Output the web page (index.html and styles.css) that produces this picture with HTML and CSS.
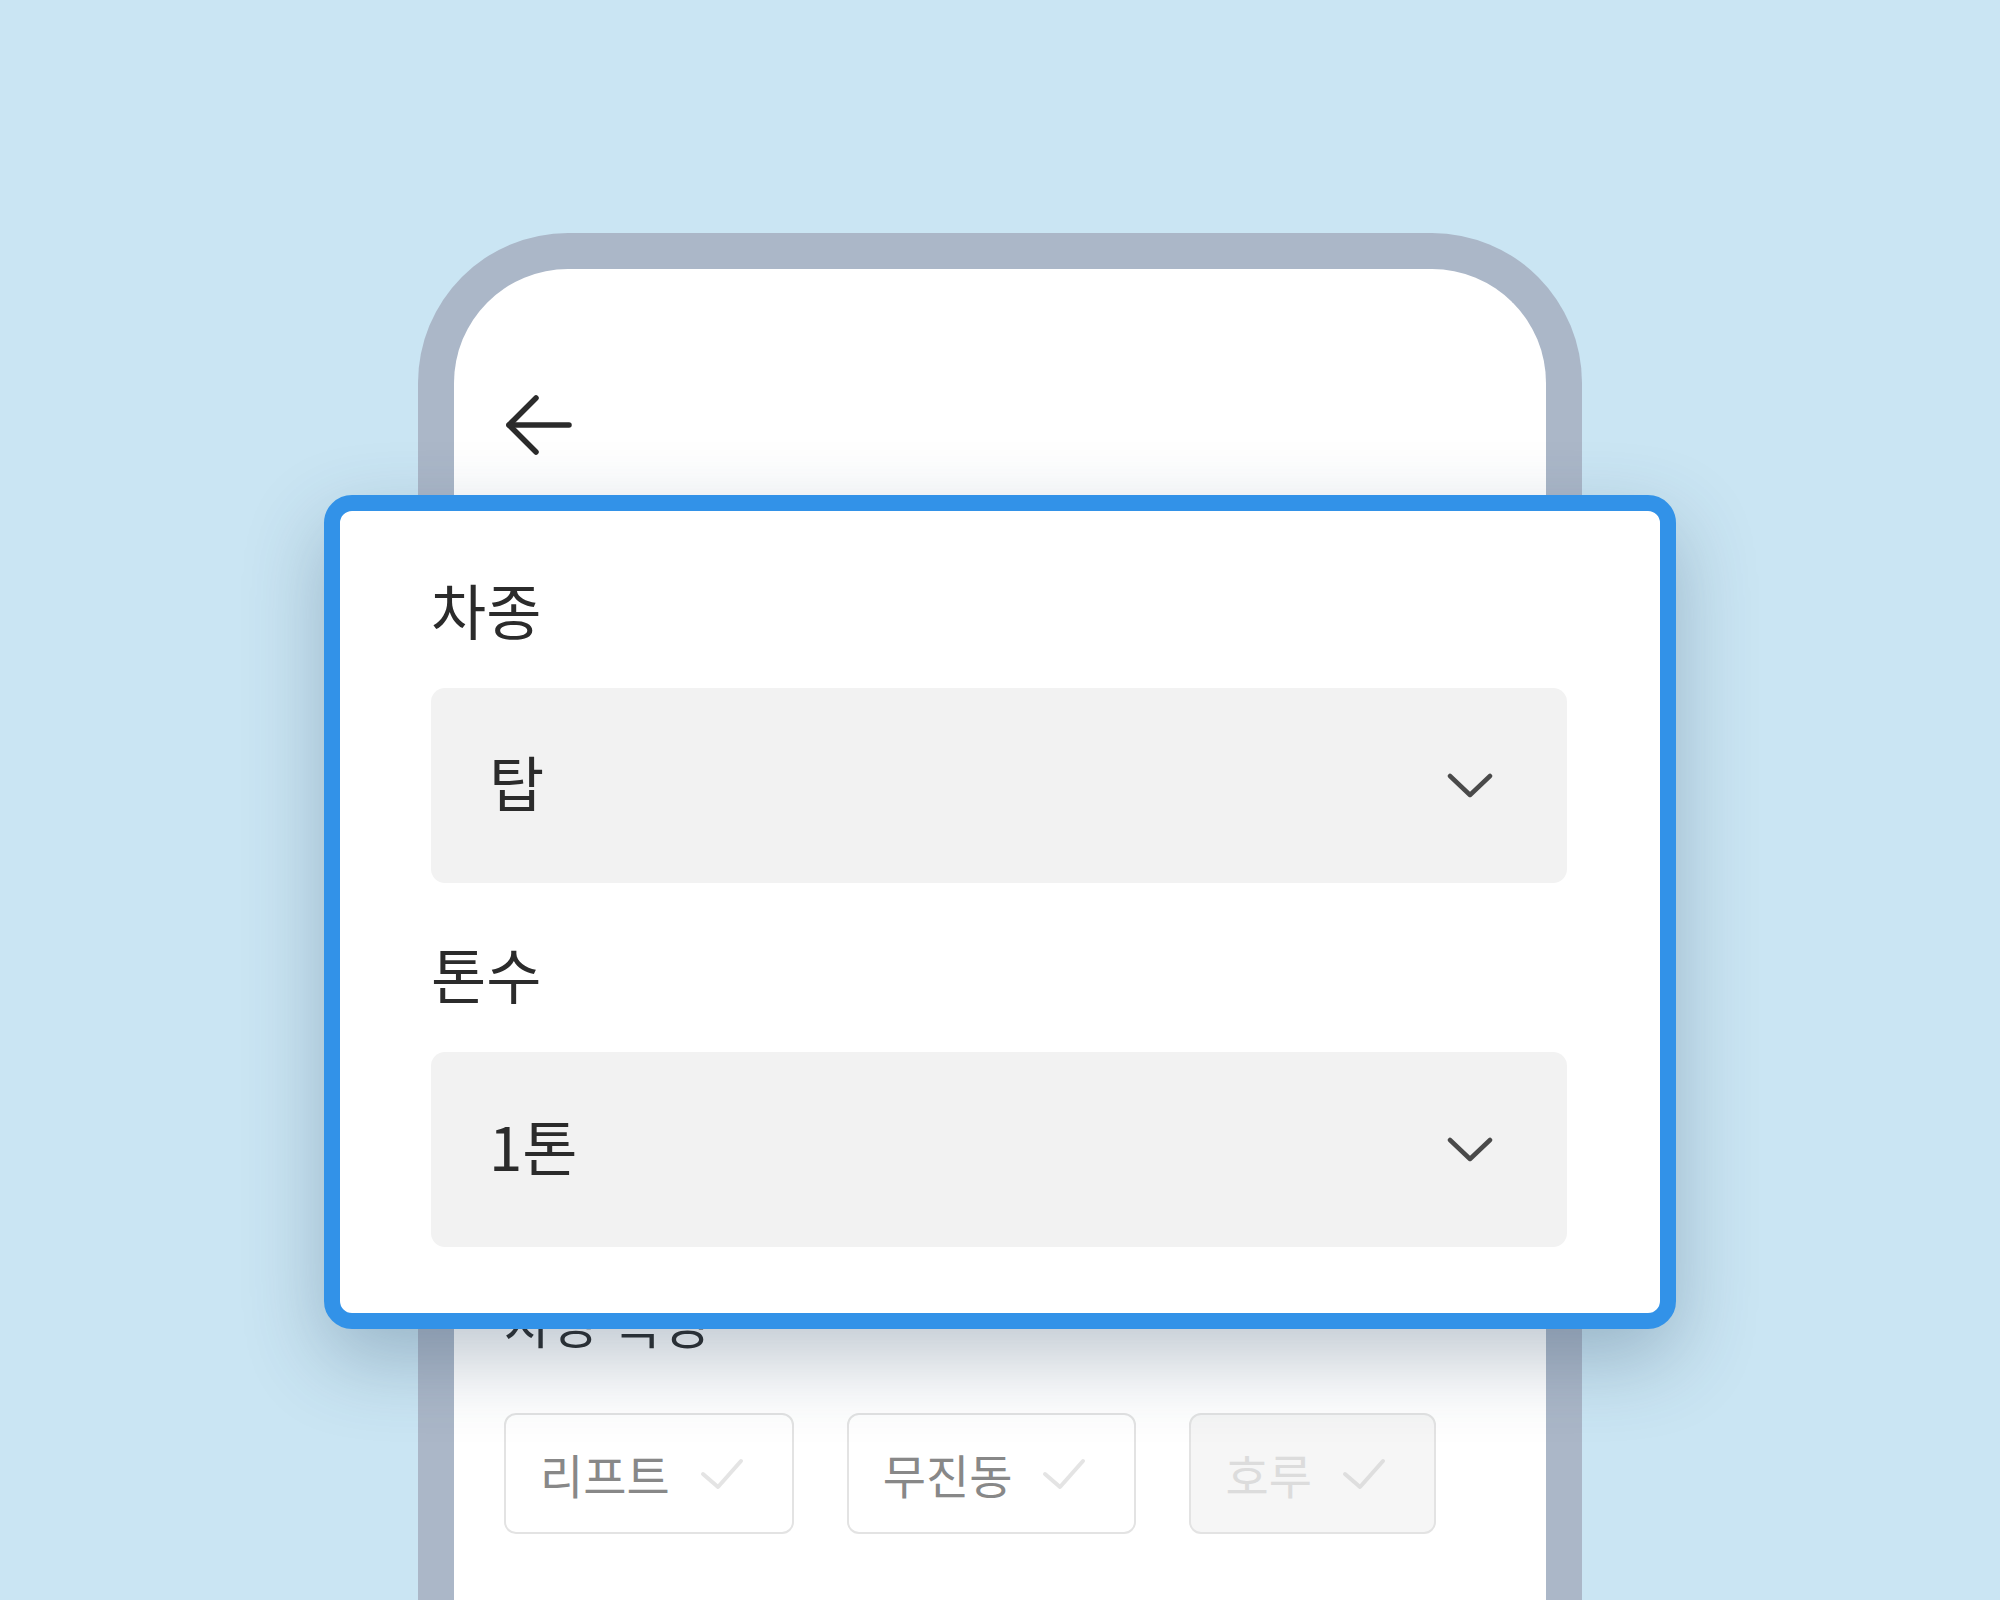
FILE: index.html
```html
<!DOCTYPE html>
<html lang="ko">
<head>
  <meta charset="utf-8">
  <title>차량 정보</title>
  <link rel="stylesheet" href="styles.css">
</head>
<body>
  <div class="stage">
    <div class="phone">
      <div class="appbar">
        <svg class="back" width="70" height="64" viewBox="0 0 70 64">
          <polyline points="32,5 5,32 32,59" />
          <line x1="5" y1="32" x2="65" y2="32" />
        </svg>
      </div>
      <div class="features">
        <h3 class="features-title">차량 특징</h3>
        <ul class="chips">
          <li class="chip">
            <span>리프트</span>
            <svg class="check" width="44" height="32" viewBox="0 0 44 32"><polyline points="3,16 18,29 41,3" /></svg>
          </li>
          <li class="chip">
            <span>무진동</span>
            <svg class="check" width="44" height="32" viewBox="0 0 44 32"><polyline points="3,16 18,29 41,3" /></svg>
          </li>
          <li class="chip disabled">
            <span>호루</span>
            <svg class="check" width="44" height="32" viewBox="0 0 44 32"><polyline points="3,16 18,29 41,3" /></svg>
          </li>
        </ul>
      </div>
    </div>

    <div class="card">
      <div class="field">
        <div class="label">차종</div>
        <div class="select">
          <span class="value">탑</span>
          <svg class="chevron" width="46" height="26" viewBox="0 0 46 26"><polyline points="3,3 23,22 43,3" /></svg>
        </div>
      </div>
      <div class="field">
        <div class="label">톤수</div>
        <div class="select">
          <span class="value">1톤</span>
          <svg class="chevron" width="46" height="26" viewBox="0 0 46 26"><polyline points="3,3 23,22 43,3" /></svg>
        </div>
      </div>
    </div>
  </div>
</body>
</html>
```

FILE: styles.css
```css
*{margin: 0;padding: 0;box-sizing: border-box;}
ul{list-style: none;}
html, body{
  width: 100%;
  height: 100%;
  background-color: #cae5f3;
  color: #2b2b2b;
  font-family: "Noto Sans CJK KR", "Noto Sans", sans-serif;
}
.stage{
  position: relative;
  height: 1600px;
  padding-top: 233px;
  overflow: hidden;
}
.phone{
  width: 1164px;
  height: 1400px;
  margin: 0 auto;
  background-color: #ffffff;
  border: 36px solid #abb7c8;
  border-bottom: none;
  border-radius: 150px 150px 0 0;
}
.appbar{
  padding: 124px 0 0 50px;
}
.back{
  display: block;
  fill: none;
  stroke: #2b2b2b;
  stroke-width: 5.5;
  stroke-linecap: round;
  stroke-linejoin: round;
}
.features{
  margin-top: 839px;
  padding-left: 50px;
}
.features-title{
  font-size: 52px;
  font-weight: 400;
  line-height: 52px;
}
.chips{
  display: flex;
  gap: 53px;
  margin-top: 65px;
}
.chip{
  display: flex;
  align-items: center;
  gap: 30px;
  height: 121px;
  padding: 0 48px 0 34px;
  border: 2px solid #e3e3e3;
  border-radius: 12px;
  font-size: 47px;
  color: #888888;
}
.check{
  fill: none;
  stroke: #e4e4e4;
  stroke-width: 4;
  stroke-linecap: round;
  stroke-linejoin: round;
}
.chip.disabled{
  background-color: #f6f6f6;
  color: #dcdcdc;
}
.chip.disabled .check{
  stroke: #dedede;
}

/* zoomed-in overlay */
.card{
  position: absolute;
  left: 324px;
  top: 495px;
  width: 1352px;
  height: 834px;
  padding: 68px 93px 66px 91px;
  background-color: #ffffff;
  border: 16px solid #3292e8;
  border-radius: 28px;
  box-shadow: 0 30px 80px rgba(40, 70, 100, 0.3);
  display: flex;
  flex-direction: column;
  gap: 60px;
}
.label{
  font-size: 60px;
  line-height: 60px;
  margin-bottom: 49px;
}
.select{
  display: flex;
  align-items: center;
  justify-content: space-between;
  height: 195px;
  padding: 0 74px 0 58px;
  background-color: #f2f2f2;
  border-radius: 14px;
  font-size: 60px;
}
.value{
  margin-bottom: 10px;
}
.chevron{
  fill: none;
  stroke: #4a4a4a;
  stroke-width: 4.5;
  stroke-linecap: round;
  stroke-linejoin: round;
}
```
